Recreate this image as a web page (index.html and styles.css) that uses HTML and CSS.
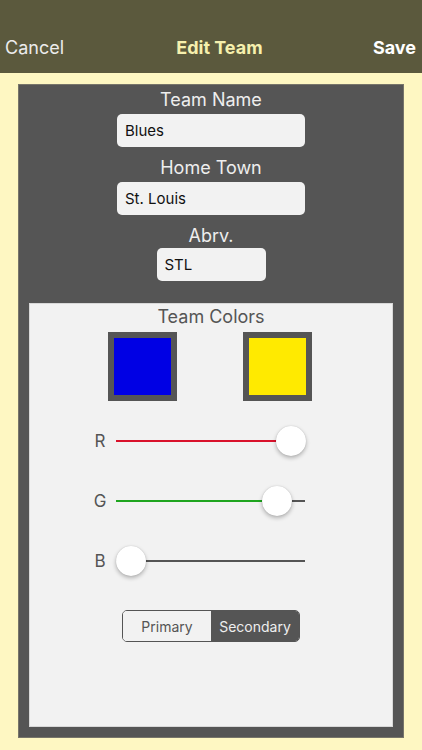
FILE: index.html
```html
<!DOCTYPE html>
<html lang="en">
<head>
<meta charset="utf-8">
<title>Edit Team</title>
<link rel="stylesheet" href="styles.css">
</head>
<body>
<header class="nav">
  <span class="nav-btn cancel">Cancel</span>
  <span class="nav-title">Edit Team</span>
  <span class="nav-btn save">Save</span>
</header>
<main class="page">
  <section class="panel">
    <div class="field">
      <label class="field-label">Team Name</label>
      <div class="input wide">Blues</div>
    </div>
    <div class="field">
      <label class="field-label">Home Town</label>
      <div class="input wide">St. Louis</div>
    </div>
    <div class="field abrv">
      <label class="field-label">Abrv.</label>
      <div class="input short">STL</div>
    </div>
    <div class="colors">
      <div class="colors-title">Team Colors</div>
      <div class="swatches">
        <div class="swatch blue"></div>
        <div class="swatch yellow"></div>
      </div>
      <div class="sliders">
        <div class="slider-row">
          <span class="slider-label">R</span>
          <div class="track">
            <div class="fill red" style="width:100%"></div>
            <div class="thumb" style="left:100%"></div>
          </div>
        </div>
        <div class="slider-row">
          <span class="slider-label">G</span>
          <div class="track">
            <div class="fill green" style="width:92%"></div>
            <div class="thumb" style="left:92%"></div>
          </div>
        </div>
        <div class="slider-row">
          <span class="slider-label">B</span>
          <div class="track">
            <div class="fill" style="width:0%"></div>
            <div class="thumb" style="left:0%"></div>
          </div>
        </div>
      </div>
      <div class="segmented">
        <span class="seg">Primary</span>
        <span class="seg active">Secondary</span>
      </div>
    </div>
  </section>
</main>
</body>
</html>
```

FILE: styles.css
```css
* { box-sizing: border-box; }
html, body { margin: 0; padding: 0; }
body {
  width: 422px;
  height: 750px;
  background: #fef7c2;
  font-family: Inter, "Noto Sans", "Liberation Sans", sans-serif;
  overflow: hidden;
}
.nav {
  height: 73px;
  padding: 22px 6px 0 5px;
  background: #5b593d;
  display: flex;
  align-items: center;
  justify-content: space-between;
  font-size: 18px;
}
.nav-btn.cancel { color: #ececec; }
.nav-btn.save { color: #ffffff; font-weight: 700; }
.nav-title { color: #f6f0ad; font-weight: 700; padding-left: 2px; }

.page {
  padding: 11px 18px 0 18px;
}
.panel {
  height: 654px;
  background: #555555;
  border: 1px solid #77756a;
  padding: 4px 10px 10px 10px;
  display: flex;
  flex-direction: column;
  align-items: center;
}
.field {
  display: flex;
  flex-direction: column;
  align-items: center;
}
.field + .field { margin-top: 10px; }
.field.abrv .field-label { margin-bottom: 1px; }
.field-label {
  color: #eeeeee;
  font-size: 18px;
  line-height: 22px;
  margin-bottom: 3px;
}
.input {
  height: 33px;
  background: #f2f2f2;
  border-radius: 5px;
  color: #111;
  font-size: 15px;
  display: flex;
  align-items: center;
  padding-left: 8px;
}
.input.wide { width: 188px; }
.input.short { width: 109px; }

.colors {
  align-self: stretch;
  margin-top: 22px;
  flex: 1;
  background: #f2f2f2;
  border: 1px solid #d8d8d8;
  display: flex;
  flex-direction: column;
  align-items: center;
  padding-top: 2px;
}
.colors-title {
  color: #555;
  font-size: 18px;
  line-height: 22px;
}
.swatches {
  margin-top: 4px;
  display: flex;
  gap: 66px;
  padding-right: 3px;
}
.swatch {
  width: 69px;
  height: 69px;
  border: 6px solid #555555;
}
.swatch.blue { background: #0000e4; }
.swatch.yellow { background: #ffea00; }

.sliders {
  align-self: stretch;
  margin-top: 25px;
  padding-left: 60px;
  display: flex;
  flex-direction: column;
  gap: 30px;
}
.slider-row {
  height: 30px;
  display: flex;
  align-items: center;
  gap: 6px;
}
.slider-label {
  width: 20px;
  text-align: center;
  color: #555;
  font-size: 17px;
}
.track {
  position: relative;
  width: 189px;
  height: 2px;
  background: #555555;
}
.fill {
  height: 2px;
  background: #555;
}
.fill.red { background: #d9122b; }
.fill.green { background: #1fa51f; }
.thumb {
  position: absolute;
  top: 50%;
  width: 30px;
  height: 30px;
  margin-top: -15px;
  border-radius: 50%;
  background: #ffffff;
  box-shadow: 0 2px 4px rgba(0,0,0,0.28), 0 0 1px rgba(0,0,0,0.2);
  transform: translateX(-15px);
}
.slider-row:nth-child(1) .thumb { margin-left: -14px; }
.slider-row:nth-child(2) .thumb { margin-left: -13px; }
.slider-row:nth-child(3) .thumb { margin-left: 15px; }

.segmented {
  margin-top: 34px;
  display: flex;
  width: 178px;
  height: 32px;
  border: 1px solid #555555;
  border-radius: 5px;
  overflow: hidden;
}
.seg {
  flex: 1;
  display: flex;
  align-items: center;
  justify-content: center;
  font-size: 14px;
  color: #555;
  background: #f2f2f2;
}
.seg.active {
  background: #555555;
  color: #eeeeee;
}
```
